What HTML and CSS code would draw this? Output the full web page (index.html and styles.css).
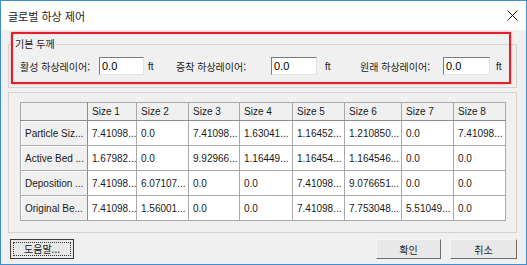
FILE: index.html
```html
<!DOCTYPE html>
<html lang="ko">
<head>
  <meta charset="UTF-8" />
  <title>글로벌 하상 제어</title>
  <link rel="stylesheet" href="styles.css">
</head>
<body>
  <div class="window">
    <div class="titlebar">
      <span class="title">글로벌 하상 제어</span>
      <svg class="close" width="11" height="11" viewBox="0 0 11 11">
        <path d="M0.5 0.5 L10.5 10.5 M10.5 0.5 L0.5 10.5" stroke="#111" stroke-width="1" fill="none" />
      </svg>
    </div>

    <div class="content">
      <fieldset class="group thickness">
        <legend>기본 두께</legend>
        <div class="fields">
          <label>활성 하상레이어:</label>
          <input type="text" value="0.0" />
          <span class="unit">ft</span>
          <label>증착 하상레이어:</label>
          <input type="text" value="0.0" />
          <span class="unit unit-mid">ft</span>
          <label>원래 하상레이어:</label>
          <input type="text" value="0.0" />
          <span class="unit unit-end">ft</span>
        </div>
      </fieldset>

      <fieldset class="group grid-group">
        <table class="grid">
          <colgroup>
            <col style="width:67px" />
            <col style="width:49px" />
            <col style="width:52px" />
            <col style="width:51px" />
            <col style="width:53px" />
            <col style="width:52px" />
            <col style="width:57px" />
            <col style="width:52px" />
            <col style="width:52px" />
          </colgroup>
          <thead>
            <tr>
              <th class="corner"></th>
              <th>Size 1</th>
              <th>Size 2</th>
              <th>Size 3</th>
              <th>Size 4</th>
              <th>Size 5</th>
              <th>Size 6</th>
              <th>Size 7</th>
              <th>Size 8</th>
            </tr>
          </thead>
          <tbody>
            <tr>
              <th class="rowhead">Particle Siz...</th>
              <td>7.41098...</td><td>0.0</td><td>7.41098...</td><td>1.63041...</td>
              <td>1.16452...</td><td>1.210850...</td><td>0.0</td><td>7.41098...</td>
            </tr>
            <tr>
              <th class="rowhead">Active Bed ...</th>
              <td>1.67982...</td><td>0.0</td><td>9.92966...</td><td>1.16449...</td>
              <td>1.16454...</td><td>1.164546...</td><td>0.0</td><td>0.0</td>
            </tr>
            <tr>
              <th class="rowhead">Deposition ...</th>
              <td>7.41098...</td><td>6.07107...</td><td>0.0</td><td>0.0</td>
              <td>7.41098...</td><td>9.076651...</td><td>0.0</td><td>0.0</td>
            </tr>
            <tr>
              <th class="rowhead">Original Be...</th>
              <td>7.41098...</td><td>1.56001...</td><td>0.0</td><td>0.0</td>
              <td>7.41098...</td><td>7.753048...</td><td>5.51049...</td><td>0.0</td>
            </tr>
          </tbody>
        </table>
      </fieldset>

      <div class="buttons">
        <button class="btn btn-help"><span>도움말...</span></button>
        <div class="spacer"></div>
        <button class="btn">확인</button>
        <button class="btn btn-cancel">취소</button>
      </div>
    </div>

    <div class="highlight"></div>
  </div>
</body>
</html>
```

FILE: styles.css
```css
* {
  box-sizing: border-box;
}
body {
  margin: 0;
  background: #ffffff;
}
.window {
  position: relative;
  width: 527px;
  height: 265px;
  border: 1px solid #3d8fd1;
  background: #f0f0f0;
  font-family: "Liberation Sans", "Noto Sans CJK KR", sans-serif;
  font-size: 10px;
  color: #1a1a1a;
}
.titlebar {
  height: 29px;
  background: #ffffff;
  display: flex;
  align-items: center;
  justify-content: space-between;
  padding: 0 8px 0 7px;
}
.title {
  font-family: "Noto Sans CJK KR", sans-serif;
  font-size: 11px;
  color: #222;
}
.close {
  display: block;
}
.content {
  padding: 0 9px 0 7px;
}
.group {
  margin: 0;
  border: 1px solid #d4d4d4;
  min-width: 0;
}
.thickness {
  margin-top: 6px;
  padding: 0 0 12px 5px;
}
.thickness legend {
  padding: 0 1px;
  font-family: "Noto Sans CJK KR", sans-serif;
  font-size: 10px;
  line-height: 16px;
  color: #222;
}
.fields {
  display: grid;
  grid-template-columns: 79px 45px 32px 95px 46px 43px 83px 47px auto;
  align-items: center;
  margin: 5px 0 0 6px;
  height: 18px;
}
.fields label {
  font-family: "Noto Sans CJK KR", sans-serif;
  font-size: 10px;
  color: #222;
}
.fields input {
  height: 18px;
  width: 100%;
  border: 1px solid #e3e3e3;
  border-top-color: #7a7a7a;
  border-left-color: #7a7a7a;
  background: #fff;
  padding: 0 2px;
  font-family: "Liberation Sans", sans-serif;
  font-size: 11px;
  color: #000;
}
.unit {
  padding-left: 4px;
  font-size: 10px;
}
.unit-mid {
  padding-left: 8px;
}
.unit-end {
  padding-left: 6px;
}
.grid-group {
  margin-top: 4px;
  padding: 9px 0 11px 11px;
}
.grid {
  border-collapse: collapse;
  table-layout: fixed;
  width: 485px;
  background: #ffffff;
  border: 1px solid #8c8c8c;
}
.grid th,
.grid td {
  border: 1px solid #a9a9a9;
  padding: 0 0 0 4px;
  text-align: left;
  font-weight: normal;
  white-space: nowrap;
  overflow: hidden;
}
.grid thead th {
  height: 18px;
  background: #f0f0f0;
  border-bottom-color: #8c8c8c;
}
.grid tbody tr {
  height: 25px;
}
.grid .rowhead {
  background: #f0f0f0;
  box-shadow: inset 1px 1px 0 #ffffff;
  border-right-color: #8c8c8c;
}
.grid .corner {
  border-right-color: #8c8c8c;
}
.buttons {
  display: flex;
  margin-top: 6px;
  padding-left: 2px;
  gap: 9px;
}
.spacer {
  flex: 1;
}
.btn {
  width: 65px;
  height: 20px;
  padding: 0;
  background: #e8e8e8;
  border: 1px solid #f7f7f7;
  border-right-color: #6e6e6e;
  border-bottom-color: #6e6e6e;
  font-family: "Noto Sans CJK KR", sans-serif;
  font-size: 10px;
  color: #222;
}
.btn-cancel {
  width: 67px;
}
.btn-help {
  width: 64px;
  border: 1px solid #3a3a3a;
  padding: 2px;
}
.btn-help span {
  display: block;
  height: 100%;
  line-height: 12px;
  border: 1px dotted #333;
}
.highlight {
  position: absolute;
  left: 10px;
  top: 31px;
  width: 500px;
  height: 52px;
  border: 2px solid #e2202c;
  box-shadow: 0 0 2px rgba(226, 32, 44, 0.45), inset 0 0 1px rgba(226, 32, 44, 0.35);
  pointer-events: none;
}
```
